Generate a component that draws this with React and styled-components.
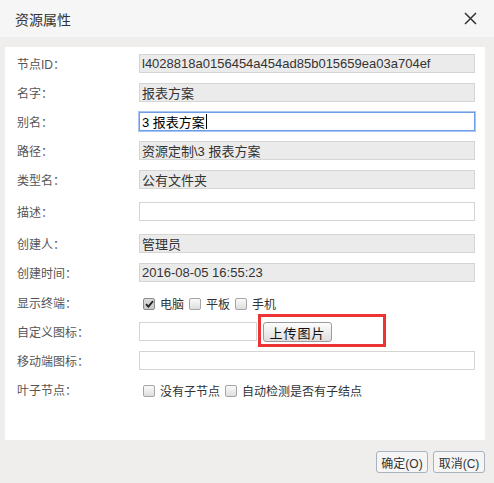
import React from 'react';
import styled, { createGlobalStyle } from 'styled-components';

const GlobalStyle = createGlobalStyle`
  html, body {
    margin: 0;
    padding: 0;
    background: #efeeec;
  }
  * {
    box-sizing: border-box;
  }
`;

const FONT = `"Liberation Sans", "Noto Sans CJK SC", sans-serif`;

const Dialog = styled.div`
  width: 494px;
  height: 483px;
  background: #efeeec;
  font-family: ${FONT};
  display: flex;
  flex-direction: column;
`;

const TitleBar = styled.div`
  height: 37px;
  flex-shrink: 0;
  display: flex;
  align-items: center;
  justify-content: space-between;
  padding: 0 17px 0 15px;
  background: #f6f6f6;
  color: #333;
  font-size: 14px;
`;

const CloseButton = styled.button`
  width: 14px;
  height: 14px;
  padding: 0;
  border: 0;
  background: none;
  display: flex;
  align-items: center;
  justify-content: center;
`;

const Body = styled.div`
  flex: 1;
  display: flex;
  flex-direction: column;
  padding: 10px 9px 0 5px;
`;

const Panel = styled.div`
  height: 393px;
  background: #fff;
  padding: 7px 10px 0 12px;
  display: flex;
  flex-direction: column;
  gap: 10px;
`;

const Row = styled.div`
  display: flex;
  align-items: center;
  height: 19px;
  margin-top: ${p => p.$space || 0}px;
`;

const Label = styled.div`
  width: 122px;
  height: 19px;
  flex-shrink: 0;
  padding-top: 2px;
  font-size: 12px;
  color: #555;
  line-height: 19px;
`;

const Field = styled.div`
  flex: ${p => (p.$width ? 'none' : 1)};
  width: ${p => (p.$width ? `${p.$width}px` : 'auto')};
  height: 19px;
  display: flex;
  align-items: center;
  padding: 0 2px;
  font-size: 13px;
  white-space: pre;
  overflow: hidden;
  color: ${p => (p.$focused ? '#000' : '#333')};
  background: ${p => (p.$readOnly ? '#ebebeb' : '#fff')};
  border: 1px solid ${p => (p.$focused ? '#6c9de6' : '#d5d5d3')};
  box-shadow: ${p => (p.$focused ? '0 0 0 1px #a9c5f2' : 'none')};
`;

const Caret = styled.span`
  display: inline-block;
  width: 1px;
  height: 15px;
  margin-left: 1px;
  background: #000;
`;

const Options = styled.div`
  display: flex;
  align-items: center;
  gap: 5px;
  padding-left: 4px;
  margin-top: 2px;
  font-size: 12px;
  color: #333;
`;

const Option = styled.label`
  display: flex;
  align-items: center;
  gap: 5px;
`;

const Box = styled.span`
  width: 12px;
  height: 12px;
  border: 1px solid ${p => (p.$checked ? '#8a8a8a' : '#a5a5a5')};
  border-radius: 2px;
  background: ${p =>
    p.$checked
      ? 'linear-gradient(#dcdcdc, #c8c8c8)'
      : 'linear-gradient(#fafafa, #dedede)'};
  display: flex;
  align-items: center;
  justify-content: center;
  margin-top: 1px;
`;

const Upload = styled.div`
  position: relative;
  margin-left: 6px;
`;

const Highlight = styled.span`
  position: absolute;
  left: -5px;
  top: -8px;
  width: 128px;
  height: 33px;
  border: 3px solid #ec3434;
  pointer-events: none;
`;

const UploadButton = styled.button`
  display: block;
  width: 69px;
  height: 20px;
  padding: 0;
  font-family: ${FONT};
  font-size: 13px;
  letter-spacing: 1px;
  color: #111;
  background: linear-gradient(#fdfdfd, #dedede);
  border: 1px solid #9c9c9c;
  border-radius: 3px;
`;

const Footer = styled.div`
  display: flex;
  justify-content: flex-end;
  gap: 5px;
  padding-top: 11px;
`;

const FooterButton = styled.button`
  height: 22px;
  width: ${p => p.$width}px;
  padding: 0;
  font-family: ${FONT};
  font-size: 12px;
  color: #333;
  background: #f5f5f5;
  border: 1px solid #a9b3bf;
  border-radius: 3px;
`;

const Check = ({ checked, children }) => (
  <Option>
    <Box $checked={checked}>
      {checked && (
        <svg width="9" height="8" viewBox="0 0 9 8">
          <path d="M1 4.2 L3.4 6.6 L8 1.2" fill="none" stroke="#222" strokeWidth="1.8" />
        </svg>
      )}
    </Box>
    {children}
  </Option>
);

const App = () => (
  <>
    <GlobalStyle />
    <Dialog>
      <TitleBar>
        <span>资源属性</span>
        <CloseButton aria-label="关闭">
          <svg width="13" height="13" viewBox="0 0 13 13">
            <path d="M1 1 L12 12 M12 1 L1 12" stroke="#333" strokeWidth="1.5" />
          </svg>
        </CloseButton>
      </TitleBar>
      <Body>
        <Panel>
          <Row>
            <Label>节点ID：</Label>
            <Field $readOnly>l4028818a0156454a454ad85b015659ea03a704ef</Field>
          </Row>
          <Row>
            <Label>名字：</Label>
            <Field $readOnly>报表方案</Field>
          </Row>
          <Row>
            <Label>别名：</Label>
            <Field $focused>{'3 报表方案'}<Caret /></Field>
          </Row>
          <Row>
            <Label>路径：</Label>
            <Field $readOnly>{'资源定制\\3 报表方案'}</Field>
          </Row>
          <Row>
            <Label>类型名：</Label>
            <Field $readOnly>公有文件夹</Field>
          </Row>
          <Row $space={3}>
            <Label>描述：</Label>
            <Field />
          </Row>
          <Row $space={3}>
            <Label>创建人：</Label>
            <Field $readOnly>管理员</Field>
          </Row>
          <Row>
            <Label>创建时间：</Label>
            <Field $readOnly>2016-08-05 16:55:23</Field>
          </Row>
          <Row $space={1}>
            <Label>显示终端：</Label>
            <Options>
              <Check checked>电脑</Check>
              <Check>平板</Check>
              <Check>手机</Check>
            </Options>
          </Row>
          <Row>
            <Label>自定义图标：</Label>
            <Field $width={118} />
            <Upload>
              <UploadButton>上传图片</UploadButton>
              <Highlight />
            </Upload>
          </Row>
          <Row>
            <Label>移动端图标：</Label>
            <Field />
          </Row>
          <Row>
            <Label>叶子节点：</Label>
            <Options>
              <Check>没有子节点</Check>
              <Check>自动检测是否有子结点</Check>
            </Options>
          </Row>
        </Panel>
        <Footer>
          <FooterButton $width={52}>确定(O)</FooterButton>
          <FooterButton $width={52}>取消(C)</FooterButton>
        </Footer>
      </Body>
    </Dialog>
  </>
);

export default App;
